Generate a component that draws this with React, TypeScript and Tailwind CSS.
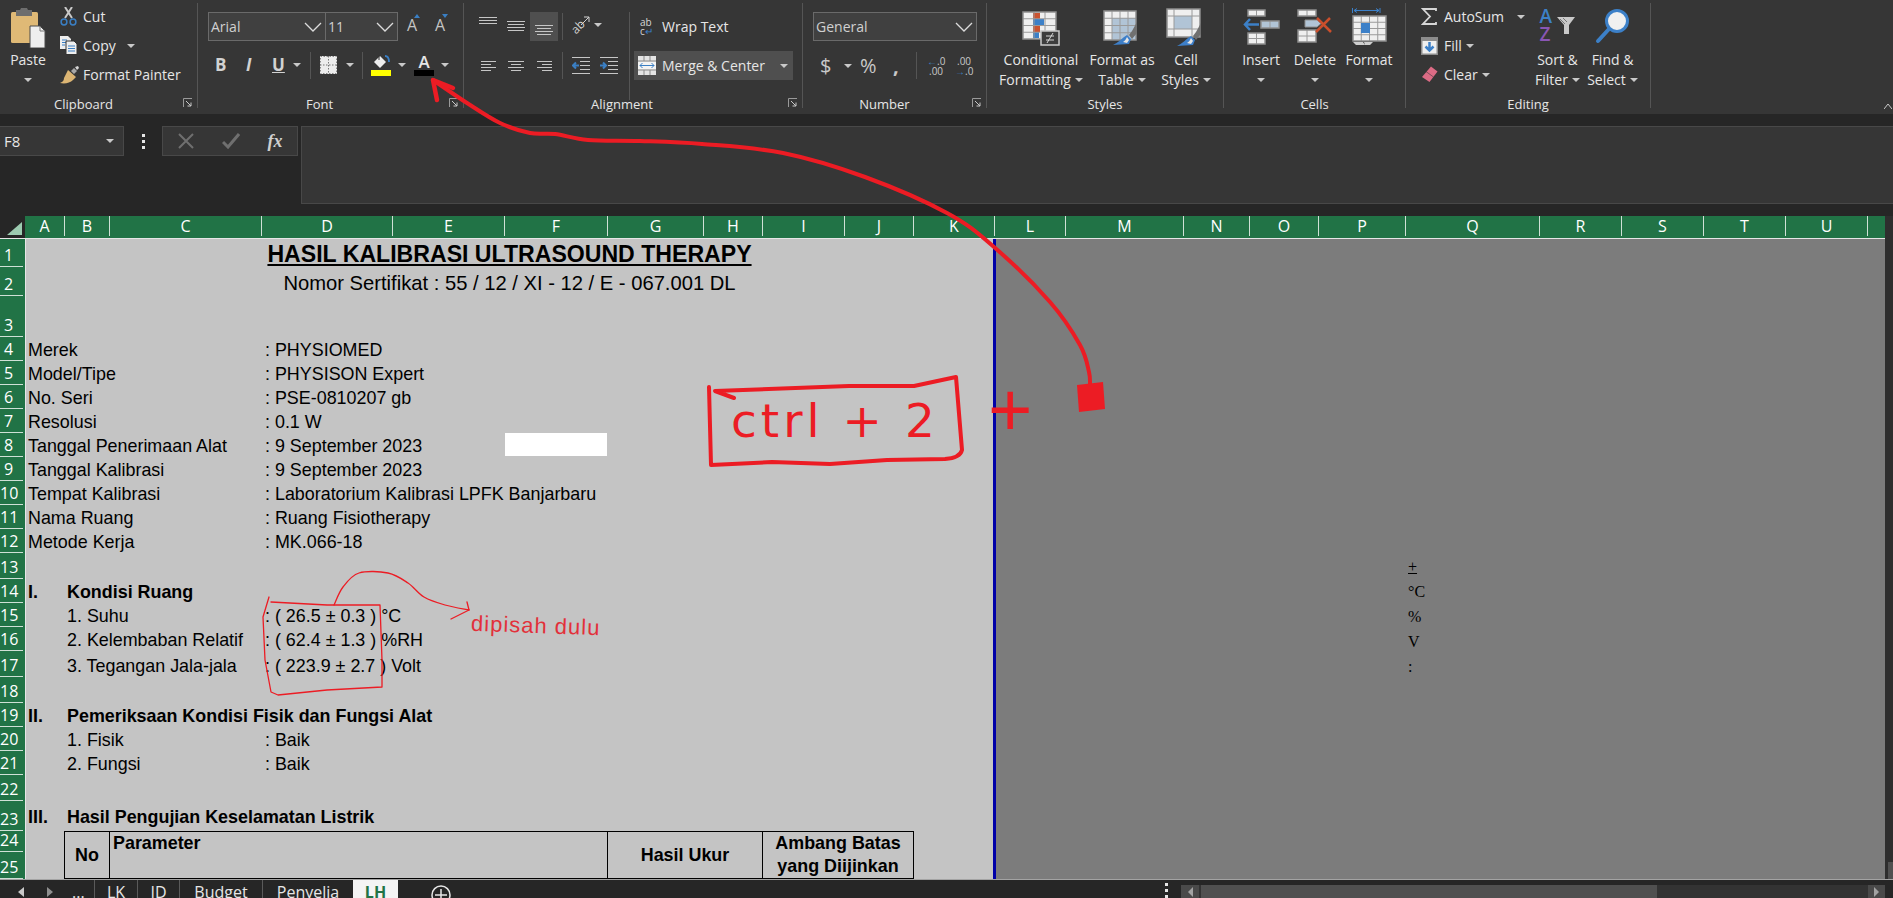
import React from "react";

const Caret = ({ className = "" }: { className?: string }) => (
  <svg width="8" height="4" viewBox="0 0 8 4" className={`shrink-0 ${className}`}>
    <path d="M0 0h8L4 4z" fill="#c9c9c9" />
  </svg>
);

const Chevron = () => (
  <svg width="18" height="10" viewBox="0 0 18 10" className="shrink-0">
    <path d="M1 1l8 8 8-8" fill="none" stroke="#dcdcdc" strokeWidth="1.3" />
  </svg>
);

const Launcher = () => (
  <svg width="10" height="10" viewBox="0 0 10 10">
    <path d="M.5 9V.5H9" fill="none" stroke="#9a9a9a" />
    <path d="M3 3l5 5M8 4.5V8H4.5" fill="none" stroke="#c9c9c9" />
  </svg>
);

const Sep = ({ h = "h-[105px] mt-[3px]" }: { h?: string }) => <div className={`w-px shrink-0 bg-[#555555] ${h}`} />;
const MiniSep = () => <div className="h-[27px] w-px shrink-0 bg-[#555555]" />;

function Group({ className, label, labelClass = "", launcher = false, children }: { className: string; label: string; labelClass?: string; launcher?: boolean; children: React.ReactNode }) {
  return (
    <section className={`relative flex h-[114px] shrink-0 flex-col ${className}`}>
      <div className="h-[94px] shrink-0">{children}</div>
      <div className={`h-[20px] text-center text-[13px] leading-[20px] ${labelClass}`}>{label}</div>
      {launcher && (
        <div className="absolute right-[4px] top-[98px]">
          <Launcher />
        </div>
      )}
    </section>
  );
}

const PasteIcon = () => (
  <svg width="36" height="40" viewBox="0 0 36 40">
    <rect x="1" y="4" width="27" height="31" rx="1.5" fill="#dfb976" />
    <path d="M6 8V2h4l1-2h6l1 2h4v6z" fill="#6e6e6e" />
    <path d="M20 18h10l5 5v17H20z" fill="#eeeeee" stroke="#4a4a4a" />
    <path d="M30 18v5h5" fill="none" stroke="#777777" />
  </svg>
);
const CutIcon = () => (
  <svg width="17" height="19" viewBox="0 0 17 19">
    <path d="M5 11L12 0M12 11L5 0" stroke="#c9c9c9" strokeWidth="2" />
    <circle cx="4" cy="15" r="2.9" fill="none" stroke="#3a7fc4" strokeWidth="1.5" />
    <circle cx="13" cy="15" r="2.9" fill="none" stroke="#3a7fc4" strokeWidth="1.5" />
  </svg>
);
const CopyIcon = () => (
  <svg width="18" height="19" viewBox="0 0 18 19">
    <path d="M0 0h8l3 3v10H0z" fill="#eeeeee" />
    <path d="M2 4h5M2 6.5h5M2 9h3" stroke="#3a7fc4" />
    <path d="M6 5h8l3 3v10.500H6z" fill="#eeeeee" stroke="#333333" />
    <path d="M8 10h7M8 12.500h7M8 15h7" stroke="#3a7fc4" />
  </svg>
);
const PainterIcon = () => (
  <svg width="19" height="18" viewBox="0 0 19 18">
    <path d="M11 5l3-3 3 3-3 3z" fill="#a8a8a8" />
    <path d="M15 1l3-1 1 2-2 2z" fill="#d8d8d8" />
    <path d="M8 3l8 7-3 3c-3 3-8 4-13 3 3-1 4-3 4-5z" transform="translate(0 1)" fill="#dcb573" />
  </svg>
);

const SmallBtn = ({ icon, label, caret, caretClass = "ml-[4px]" }: { icon: React.ReactNode; label: string; caret?: boolean; caretClass?: string }) => (
  <div className="flex h-[29px] items-center">
    <div className="flex w-[23px] shrink-0 items-center">{icon}</div>
    <span className="whitespace-nowrap">{label}</span>
    {caret && <Caret className={caretClass} />}
  </div>
);

const Combo = ({ className, text }: { className: string; text: string }) => (
  <div className={`flex h-[29px] items-center justify-between border border-[#6a6a6a] bg-[#404040] pl-[2px] pr-[3px] text-[#d0d0d0] ${className}`}>
    <span>{text}</span>
    <Chevron />
  </div>
);

const GrowA = ({ up }: { up: boolean }) => (
  <div className="relative flex w-[18px] justify-center text-[16px] leading-[20px] text-[#c4c4c4]">
    <span>A</span>
    <svg width="6" height="4" viewBox="0 0 6 4" className="absolute right-[1px] top-[-1px]">
      <path d={up ? "M0 4h6L3 0z" : "M0 0h6L3 4z"} fill="#3a7fc4" />
    </svg>
  </div>
);

const BordersIcon = () => (
  <svg width="17" height="18" viewBox="0 0 17 18">
    <rect width="17" height="18" fill="#ededed" />
    <path d="M8.500 0v18M0 9h17" stroke="#777777" strokeDasharray="1.500 1.500" />
    <path d="M.5.5h16v17H.5z" fill="none" stroke="#8a8a8a" strokeDasharray="1.500 1.500" />
  </svg>
);
const BucketIcon = () => (
  <svg width="20" height="14" viewBox="0 0 20 14">
    <path d="M9 1l6 6-6 6-6-6z" fill="#eeeeee" />
    <path d="M8 0v5" stroke="#333333" />
    <path d="M14 1c3 0 4 3 4 6" fill="none" stroke="#3a7fc4" strokeWidth="1.800" />
  </svg>
);

const Lines = ({ w = 18, ys, x = [] as number[], ws = [] as number[] }: { w?: number; ys: number[]; x?: number[]; ws?: number[] }) => (
  <svg width={w} height={Math.max(...ys) + 1} viewBox={`0 0 ${w} ${Math.max(...ys) + 1}`}>
    {ys.map((y, i) => (
      <rect key={i} x={x[i] ?? 0} y={y} width={ws[i] ?? w} height="1" fill="#c6c6c6" />
    ))}
  </svg>
);

const IndentIcon = ({ inc }: { inc?: boolean }) => (
  <svg width="18" height="17" viewBox="0 0 18 17">
    <path d="M0 .5h18M8 4.500h10M8 8.500h10M8 12.500h10M0 16.500h18" stroke="#c6c6c6" />
    <path d={inc ? "M0 8.500h5M3 5.500l3 3-3 3" : "M7 8.500H1M4 5.500l-3 3 3 3"} fill="none" stroke="#3a7fc4" strokeWidth="2" />
  </svg>
);

const MergeIcon = () => (
  <svg width="18" height="19" viewBox="0 0 18 19">
    <rect width="18" height="19" fill="#e4e4e4" />
    <path d="M0 5h18M0 14h18M6 0v5M12 0v5M6 14v5M12 14v5" stroke="#8a8a8a" />
    <rect x="0" y="6" width="18" height="7" fill="#f4f4f4" />
    <path d="M2 9.500h14M4.500 7l-2.500 2.500L4.500 12M13.500 7l2.500 2.500L13.500 12" fill="none" stroke="#3a7fc4" />
  </svg>
);

const Grid = ({ x, y, w, h, cols, rows }: { x: number; y: number; w: number; h: number; cols: number; rows: number }) => (
  <>
    {Array.from({ length: cols - 1 }, (_, i) => (
      <path key={`c${i}`} d={`M${x + ((i + 1) * w) / cols} ${y}v${h}`} stroke="#9a9a9a" />
    ))}
    {Array.from({ length: rows - 1 }, (_, i) => (
      <path key={`r${i}`} d={`M${x} ${y + ((i + 1) * h) / rows}h${w}`} stroke="#9a9a9a" />
    ))}
    <rect x={x} y={y} width={w} height={h} fill="none" stroke="#8f8f8f" strokeWidth="1.500" />
  </>
);

const CondIcon = () => (
  <svg width="38" height="36" viewBox="0 0 38 36">
    <rect x="1" y="1" width="33" height="27" fill="#efefef" />
    <rect x="11" y="2" width="7" height="6" fill="#ca5330" />
    <rect x="11" y="8" width="11" height="6" fill="#3c80c8" />
    <rect x="11" y="15" width="7" height="6" fill="#ca5330" />
    <rect x="11" y="21" width="6" height="6" fill="#3c80c8" />
    <Grid x={1} y={1} w={33} h={27} cols={3} rows={4} />
    <rect x="19" y="20" width="18" height="14" fill="#3d3d3d" stroke="#c9c9c9" strokeWidth="1.500" />
    <path d="M24 25h8M24 29h8M31 22l-6 10" stroke="#d6d6d6" />
  </svg>
);
const Brush = ({ x, y }: { x: number; y: number }) => (
  <g transform={`translate(${x} ${y})`}>
    <path d="M16 13l3-4 5-9v11l-5 6z" fill="#707070" />
    <path d="M14 13l4 4-2 5-16 1c5-2 9-7 14-10z" fill="#3d7fc9" />
    <path d="M10 20c2-1 3-3 4-5l2 3-2 3z" fill="#e6e6e6" />
  </g>
);
const TableIcon = () => (
  <svg width="38" height="36" viewBox="0 0 38 36">
    <rect x="1" y="1" width="32" height="29" fill="#efefef" />
    <rect x="9" y="8" width="24" height="22" fill="#b1c4d6" />
    <Grid x={1} y={1} w={32} h={29} cols={4} rows={4} />
    <Brush x={10} y={12} />
  </svg>
);
const CellIcon = () => (
  <svg width="40" height="39" viewBox="0 0 40 39">
    <rect x="1" y="1" width="33" height="28" fill="#efefef" stroke="#8f8f8f" strokeWidth="1.500" />
    <rect x="8" y="8" width="18" height="13" fill="#b1c4d6" />
    <path d="M1 8h33M1 21h33M8 1v28M26 1v28" stroke="#9a9a9a" />
    <Brush x={11} y={15} />
  </svg>
);
const Cells = ({ x, y, w, h, c, r, fill = "#efefef" }: { x: number; y: number; w: number; h: number; c: number; r: number; fill?: string }) => (
  <>
    <rect x={x} y={y} width={w} height={h} fill={fill} />
    <Grid x={x} y={y} w={w} h={h} cols={c} rows={r} />
  </>
);
const InsertIcon = () => (
  <svg width="37" height="36" viewBox="0 0 37 36">
    <Cells x={5} y={1} w={17} h={6} c={2} r={1} />
    <Cells x={18} y={12} w={18} h={7} c={2} r={1} fill="#b1c4d6" />
    <Cells x={5} y={24} w={17} h={11} c={2} r={2} />
    <path d="M16 15.500H2M7 10l-5 5.500L7 21" fill="none" stroke="#3c80c8" strokeWidth="2.500" />
  </svg>
);
const DeleteIcon = () => (
  <svg width="36" height="35" viewBox="0 0 36 35">
    <Cells x={1} y={1} w={18} h={6} c={2} r={1} />
    <path d="M8 11h12l4 3.500-4 3.500H8z" fill="#b1c4d6" stroke="#8f8f8f" />
    <Cells x={1} y={21} w={18} h={12} c={2} r={2} />
    <path d="M19 23L33 9M20 9l14 14" stroke="#cb4f2c" strokeWidth="2.500" />
  </svg>
);
const FormatIcon = () => (
  <svg width="35" height="37" viewBox="0 0 35 37">
    <path d="M.5 0v5M28 0v5M2 2.500h25M5 .5l-3 2 3 2M24 .5l3 2-3 2" fill="none" stroke="#3c80c8" />
    <Cells x={1} y={8} w={33} h={25} c={4} r={4} />
    <rect x={9} y={15} width={9} height={10} fill="#3c80c8" />
    <path d="M1 34h10l2 3H4zM12 34h9l-3 3h-5z" fill="#cfcfcf" />
  </svg>
);
const SigmaIcon = () => (
  <svg width="16" height="17" viewBox="0 0 16 17">
    <path d="M15 3V1H2l7 7.500L2 16h13v-2" fill="none" stroke="#d6d6d6" strokeWidth="1.800" />
  </svg>
);
const FillIcon = () => (
  <svg width="17" height="18" viewBox="0 0 17 18">
    <rect width="17" height="18" fill="#8c8c8c" />
    <rect x="1.500" y="4" width="14" height="12.500" fill="#efefef" />
    <path d="M8.500 5v8M4.500 9.500l4 4 4-4" fill="none" stroke="#3c80c8" strokeWidth="2.500" />
  </svg>
);
const EraserIcon = () => (
  <svg width="17" height="17" viewBox="0 0 17 17">
    <path d="M10 .5l6.500 5-8 10.500L1 11z" fill="#dc6b85" />
    <path d="M5 5.500l7.500 5.500" stroke="#3a3a3a" strokeWidth=".6" />
  </svg>
);
const SortIcon = () => (
  <div className="relative h-[36px] w-[36px]">
    <span className="absolute left-0 top-[-3px] text-[19px] font-semibold leading-[20px] text-[#3c80c8]">A</span>
    <span className="absolute left-0 top-[15px] text-[19px] font-semibold leading-[20px] text-[#8a56b4]">Z</span>
    <svg width="18" height="17" viewBox="0 0 18 17" className="absolute left-[17px] top-[8px]">
      <path d="M0 0h18l-6 8v9H7V8z" fill="#c9c9c9" />
      <path d="M3 2l5 5M6 1l4 4" stroke="#777777" />
    </svg>
  </div>
);
const FindIcon = () => (
  <svg width="36" height="36" viewBox="0 0 36 36">
    <path d="M14 21L3 33" stroke="#3c80c8" strokeWidth="4" strokeLinecap="round" />
    <circle cx="22" cy="13" r="10.500" fill="#f0f0f0" stroke="#3c80c8" strokeWidth="3" />
  </svg>
);

const Big = ({ className, icon, iconClass = "items-end", lines, oneLine }: { className: string; icon: React.ReactNode; iconClass?: string; lines: [string, string?]; oneLine?: boolean }) => (
  <div className={`flex shrink-0 flex-col items-center ${className}`}>
    <div className={`flex h-[50px] w-full justify-center ${iconClass}`}>{icon}</div>
    <div className="whitespace-nowrap text-center leading-[20px]">{lines[0]}</div>
    {oneLine ? (
      <div className="flex h-[20px] items-center"><Caret /></div>
    ) : (
      <div className="flex h-[20px] items-center whitespace-nowrap leading-[20px]">
        {lines[1]}
        <Caret className="ml-[4px]" />
      </div>
    )}
  </div>
);

function Ribbon() {
  return (
    <div className="flex h-[114px] bg-[#363636] text-[14px] text-[#e6e6e6]">
      <Group className="w-[197px]" label="Clipboard" labelClass="pr-[30px]" launcher>
        <div className="flex">
          <div className="flex w-[60px] shrink-0 flex-col items-center pr-[4px]">
            <div className="flex h-[50px] items-end pb-[2px]"><PasteIcon /></div>
            <div className="leading-[20px]">Paste</div>
            <div className="flex h-[20px] items-center"><Caret /></div>
          </div>
          <div className="flex flex-col pt-[2px]">
            <SmallBtn icon={<CutIcon />} label="Cut" />
            <SmallBtn icon={<CopyIcon />} label="Copy" caret caretClass="ml-[11px]" />
            <SmallBtn icon={<PainterIcon />} label="Format Painter" />
          </div>
        </div>
      </Group>
      <Sep />
      <Group className="w-[265px]" label="Font" labelClass="pr-[22px]" launcher>
        <div className="flex h-[41px] items-end pl-[10px]">
          <Combo className="w-[118px] font-normal" text="Arial" />
          <Combo className="w-[72px] border-l-0" text="11" />
          <div className="ml-[5px] mb-[6px] flex gap-[10px]"><GrowA up /><GrowA up={false} /></div>
        </div>
        <div className="mt-[10px] flex h-[28px] items-center pl-[17px] text-[17px] font-bold text-[#d2d2d2]">
          <span className="w-[31px]">B</span>
          <span className="w-[26px] italic">I</span>
          <span className="w-[18px] underline">U</span>
          <Caret className="ml-[3px]" />
          <div className="ml-[9px]"><MiniSep /></div>
          <div className="ml-[9px]"><BordersIcon /></div>
          <Caret className="ml-[9px]" />
          <div className="ml-[8px]"><MiniSep /></div>
          <div className="ml-[8px] flex w-[20px] flex-col">
            <BucketIcon />
            <div className="mt-[1px] h-[6px] bg-[#ffff00]" />
          </div>
          <Caret className="ml-[7px]" />
          <div className="ml-[8px] flex w-[20px] flex-col items-center">
            <span className="text-[17px] font-semibold leading-[15px] text-[#e6e6e6]">A</span>
            <div className="mt-[1px] h-[6px] w-full bg-black" />
          </div>
          <Caret className="ml-[7px]" />
        </div>
      </Group>
      <Sep />
      <Group className="w-[338px]" label="Alignment" labelClass="pr-[22px]" launcher>
        <div className="flex h-[94px]">
          <div className="w-[165px] shrink-0 pl-[10px]">
            <div className="flex h-[41px] items-end">
              <div className="flex h-[29px] w-[28px] justify-center pt-[5px]"><Lines ys={[0, 3, 6]} /></div>
              <div className="flex h-[29px] w-[28px] justify-center pt-[9px]"><Lines ys={[0, 3, 6, 9]} x={[0, 1, 0, 1]} ws={[18, 16, 18, 16]} /></div>
              <div className="flex h-[29px] w-[28px] justify-center bg-[#4f4f4f] pt-[13px]"><Lines ys={[0, 3, 6, 9]} x={[0, 2, 0, 2]} ws={[18, 14, 18, 14]} /></div>
              <div className="ml-[4px] mb-[1px]"><MiniSep /></div>
              <div className="relative ml-[5px] flex h-[29px] w-[20px] items-center justify-center">
                <span className="-rotate-45 text-[12px] leading-none text-[#d2d2d2]">ab</span>
                <svg width="10" height="10" viewBox="0 0 10 10" className="absolute right-[-2px] top-[4px]">
                  <path d="M1 9l8-8M4 1h5v5" fill="none" stroke="#d2d2d2" />
                </svg>
              </div>
              <Caret className="mb-[14px] ml-[6px]" />
            </div>
            <div className="mt-[10px] flex h-[29px] items-center">
              <div className="flex w-[28px] justify-center"><Lines w={15} ys={[0, 3, 6, 9]} ws={[15, 10, 15, 10]} /></div>
              <div className="flex w-[28px] justify-center"><Lines w={16} ys={[0, 3, 6, 9]} x={[0, 3, 0, 3]} ws={[16, 10, 16, 10]} /></div>
              <div className="flex w-[28px] justify-center"><Lines w={15} ys={[0, 3, 6, 9]} x={[0, 5, 0, 5]} ws={[15, 10, 15, 10]} /></div>
              <div className="ml-[4px]"><MiniSep /></div>
              <div className="ml-[9px]"><IndentIcon /></div>
              <div className="ml-[10px]"><IndentIcon inc /></div>
            </div>
          </div>
          <Sep h="h-[88px] mt-[12px]" />
          <div className="flex-1 pl-[4px]">
            <div className="flex h-[41px] items-end">
              <div className="flex h-[29px] items-center pl-[6px]">
                <div className="flex w-[22px] flex-col text-[10px] leading-[9px] text-[#d6d6d6]">
                  <span>ab</span>
                  <span>c<span className="text-[#3c80c8]">↵</span></span>
                </div>
                <span className="text-[14px]">Wrap Text</span>
              </div>
            </div>
            <div className="mt-[10px] flex h-[29px] w-[159px] items-center bg-[#4f4f4f] pl-[4px]">
              <div className="w-[24px]"><MergeIcon /></div>
              <span className="whitespace-nowrap">Merge &amp; Center</span>
              <Caret className="ml-auto mr-[5px]" />
            </div>
          </div>
        </div>
      </Group>
      <Sep />
      <Group className="w-[183px]" label="Number" labelClass="pr-[20px]" launcher>
        <div className="flex h-[41px] items-end pl-[10px]">
          <Combo className="w-[164px]" text="General" />
        </div>
        <div className="mt-[10px] flex h-[29px] items-center pl-[17px] text-[#c9c9c9]">
          <span className="w-[24px] text-[20px]">$</span>
          <Caret />
          <span className="ml-[8px] w-[30px] text-[20px]">%</span>
          <span className="w-[26px] pl-[3px] text-[20px] font-bold leading-[12px]">,</span>
          <MiniSep />
          <div className="ml-[10px] flex w-[28px] flex-col text-[10px] leading-[10px]">
            <span><span className="text-[#3c80c8]">←</span>.0</span>
            <span className="pl-[2px]">.00</span>
          </div>
          <div className="flex w-[20px] flex-col text-[10px] leading-[10px]">
            <span className="pl-[2px]">.00</span>
            <span><span className="text-[#3c80c8]">→</span>.0</span>
          </div>
        </div>
      </Group>
      <Sep />
      <Group className="w-[236px]" label="Styles">
        <div className="flex pl-[13px]">
          <Big className="w-[82px]" icon={<CondIcon />} iconClass="items-start pt-[11px]" lines={["Conditional", "Formatting"]} />
          <Big className="w-[80px]" icon={<TableIcon />} iconClass="items-start pt-[10px]" lines={["Format as", "Table"]} />
          <Big className="w-[48px]" icon={<CellIcon />} iconClass="items-start pt-[8px]" lines={["Cell", "Styles"]} />
        </div>
      </Group>
      <Sep />
      <Group className="w-[181px]" label="Cells">
        <div className="flex pl-[10px]">
          <Big className="w-[54px]" icon={<InsertIcon />} iconClass="items-start pt-[9px]" lines={["Insert"]} oneLine />
          <Big className="w-[54px]" icon={<DeleteIcon />} iconClass="items-start pt-[9px]" lines={["Delete"]} oneLine />
          <Big className="w-[54px]" icon={<FormatIcon />} iconClass="items-start pt-[8px]" lines={["Format"]} oneLine />
        </div>
      </Group>
      <Sep />
      <Group className="w-[244px]" label="Editing">
        <div className="flex">
          <div className="flex w-[124px] shrink-0 flex-col pl-[15px] pt-[2px]">
            <SmallBtn icon={<SigmaIcon />} label="AutoSum" caret caretClass="ml-[13px]" />
            <SmallBtn icon={<FillIcon />} label="Fill" caret />
            <SmallBtn icon={<EraserIcon />} label="Clear" caret />
          </div>
          <Big className="w-[55px]" icon={<SortIcon />} iconClass="items-start pt-[9px]" lines={["Sort &", "Filter"]} />
          <Big className="w-[55px]" icon={<FindIcon />} iconClass="items-start pt-[8px]" lines={["Find &", "Select"]} />
        </div>
      </Group>
      <Sep />
      <div className="flex flex-1 items-end justify-end pb-[5px] pr-[1px]">
        <svg width="8" height="6" viewBox="0 0 8 6"><path d="M0 6l4-5 4 5" fill="none" stroke="#c9c9c9" /></svg>
      </div>
    </div>
  );
}

function FormulaBar() {
  return (
    <div className="flex h-[102px] bg-[#262626] pt-[12px]">
      <div className="flex h-[30px] w-[124px] shrink-0 items-center justify-between border border-l-0 border-[#484848] bg-[#363636] pl-[4px] pr-[9px] text-[15px] text-[#e6e6e6]">
        <span>F8</span>
        <Caret />
      </div>
      <div className="flex h-[30px] w-[38px] shrink-0 flex-col items-center justify-center gap-[3px]">
        <i className="h-[3px] w-[3px] bg-[#e6e6e6]" />
        <i className="h-[3px] w-[3px] bg-[#e6e6e6]" />
        <i className="h-[3px] w-[3px] bg-[#e6e6e6]" />
      </div>
      <div className="flex h-[30px] w-[136px] shrink-0 items-center border border-[#484848] bg-[#363636]">
        <div className="flex w-[45px] justify-center">
          <svg width="16" height="16" viewBox="0 0 16 16"><path d="M1 1l14 14M15 1L1 15" stroke="#6f6f6f" strokeWidth="2" /></svg>
        </div>
        <div className="flex w-[46px] justify-center">
          <svg width="18" height="16" viewBox="0 0 18 16"><path d="M1 9l5 5L17 1" fill="none" stroke="#6f6f6f" strokeWidth="3" /></svg>
        </div>
        <span className="flex w-[42px] justify-center text-[18px] font-bold italic text-[#cfcfcf] [font-family:'Liberation_Serif',serif]">fx</span>
      </div>
      <div className="ml-[3px] h-[78px] flex-1 border-y border-l border-[#484848] bg-[#363636]" />
    </div>
  );
}

const cols: [string, string][] = [
  ["A", "w-[40px]"], ["B", "w-[45px]"], ["C", "w-[152px]"], ["D", "w-[131px]"], ["E", "w-[112px]"], ["F", "w-[103px]"], ["G", "w-[96px]"], ["H", "w-[59px]"], ["I", "w-[82px]"], ["J", "w-[69px]"], ["K", "w-[81px]"], ["L", "w-[71px]"], ["M", "w-[118px]"], ["N", "w-[66px]"], ["O", "w-[69px]"], ["P", "w-[87px]"], ["Q", "w-[134px]"], ["R", "w-[82px]"], ["S", "w-[82px]"], ["T", "w-[82px]"], ["U", "w-[82px]"],
];

const rowHeads: [string, string][] = [
  ["1", "h-[28px]"], ["2", "h-[29px]"], ["3", "h-[41px]"], ["4", "h-[24px]"], ["5", "h-[24px]"], ["6", "h-[24px]"], ["7", "h-[24px]"], ["8", "h-[24px]"], ["9", "h-[24px]"], ["10", "h-[24px]"], ["11", "h-[24px]"], ["12", "h-[24px]"], ["13", "h-[26px]"], ["14", "h-[24px]"], ["15", "h-[24px]"], ["16", "h-[24px]"], ["17", "h-[26px]"], ["18", "h-[26px]"], ["19", "h-[24px]"], ["20", "h-[24px]"], ["21", "h-[24px]"], ["22", "h-[26px]"], ["23", "h-[30px]"], ["24", "h-[21px]"], ["25", "h-[27px]"],
];

function ColHeaders() {
  return (
    <div className="flex h-[22px] bg-[#217346] text-[16px] text-white">
      <div className="flex h-[22px] w-[25px] shrink-0 items-end bg-[#262626] pb-[3px] pl-[7px]">
        <svg width="15" height="13" viewBox="0 0 15 13"><path d="M15 0v13H0z" fill="#9ccbb0" /></svg>
      </div>
      {cols.map(([c, w]) => (
        <div key={c} className={`flex h-[20px] shrink-0 items-center justify-center border-r border-[#cfe0d6] leading-[20px] ${w}`}>{c}</div>
      ))}
    </div>
  );
}

function RowHeaders() {
  return (
    <div className="w-[25px] shrink-0 bg-[#217346] text-[16px] text-white">
      {rowHeads.map(([n, h]) => (
        <div key={n} className={`flex w-[23px] items-end border-b border-[#cfe0d6] ${h}`}>
          <span className="w-[17px] text-center leading-[22px]">{n}</span>
        </div>
      ))}
    </div>
  );
}

const rowGrid = "grid grid-cols-[38px_45px_152px_131px_1fr] items-end whitespace-nowrap pl-0 leading-[22px]";

const InfoRow = ({ label, value }: { label: string; value: string }) => (
  <div className={`h-[24px] ${rowGrid}`}>
    <span className="col-start-1 pl-[2px]">{label}</span>
    <span className="col-start-4 pl-[4px]">{value}</span>
  </div>
);
const SecHead = ({ num, text, h = "h-[24px]", extra = "" }: { num: string; text: string; h?: string; extra?: string }) => (
  <div className={`${h} ${rowGrid} ${extra} font-bold`}>
    <span className="col-start-1 pl-[2px]">{num}</span>
    <span className="col-start-2 pl-[3px]">{text}</span>
  </div>
);
const SubRow = ({ label, value, h = "h-[24px]" }: { label: string; value: string; h?: string }) => (
  <div className={`${h} ${rowGrid}`}>
    <span className="col-start-2 pl-[3px]">{label}</span>
    <span className="col-start-4 pl-[4px]">{value}</span>
  </div>
);

function Page() {
  const infos: [string, string][] = [
    ["Merek", ": PHYSIOMED"],
    ["Model/Tipe", ": PHYSISON Expert"],
    ["No. Seri", ": PSE-0810207 gb"],
    ["Resolusi", ": 0.1 W"],
  ];
  const infos2: [string, string][] = [
    ["Tanggal Kalibrasi", ": 9 September 2023"],
    ["Tempat Kalibrasi", ": Laboratorium Kalibrasi LPFK Banjarbaru"],
    ["Nama Ruang", ": Ruang Fisiotherapy"],
    ["Metode Kerja", ": MK.066-18"],
  ];
  return (
    <div className="w-[967px] shrink-0 bg-[#c4c4c4] text-[17.9px] text-black [font-family:'Liberation_Sans',Arial,sans-serif]">
      <div className="flex h-[28px] items-end justify-center whitespace-nowrap text-[23.100px] font-bold leading-[26px] underline">HASIL KALIBRASI ULTRASOUND THERAPY</div>
      <div className="flex h-[29px] items-end justify-center whitespace-nowrap text-[20.200px] leading-[26px]">Nomor Sertifikat : 55 / 12 / XI - 12 / E - 067.001 DL</div>
      <div className="h-[41px]" />
      {infos.map(([l, v]) => <InfoRow key={l} label={l} value={v} />)}
      <div className="relative">
        <InfoRow label="Tanggal Penerimaan Alat" value=": 9 September 2023" />
        <div className="absolute left-[479px] top-[0px] h-[23px] w-[102px] bg-white" />
      </div>
      {infos2.map(([l, v]) => <InfoRow key={l} label={l} value={v} />)}
      <div className="h-[26px]" />
      <SecHead num="I." text="Kondisi Ruang" />
      <SubRow label="1. Suhu" value=": ( 26.5 ± 0.3 ) °C" />
      <SubRow label="2. Kelembaban Relatif" value=": ( 62.4 ± 1.3 ) %RH" />
      <SubRow label="3. Tegangan Jala-jala" value=": ( 223.9 ± 2.7 ) Volt" h="h-[26px]" />
      <div className="h-[26px]" />
      <SecHead num="II." text="Pemeriksaan Kondisi Fisik dan Fungsi Alat" />
      <SubRow label="1. Fisik" value=": Baik" />
      <SubRow label="2. Fungsi" value=": Baik" />
      <div className="h-[26px]" />
      <SecHead num="III." text="Hasil Pengujian Keselamatan Listrik" h="h-[30px]" extra="pb-[3px]" />
      <div className="grid h-[48px] grid-cols-[38px_45px_498px_155px_152px] font-bold">
        <div />
        <div className="flex items-center justify-center border-y border-l border-black">No</div>
        <div className="border-y border-l border-black pl-[3px] leading-[22px]">Parameter</div>
        <div className="flex items-center justify-center border-y border-l border-black">Hasil Ukur</div>
        <div className="flex flex-col items-center justify-center whitespace-nowrap border border-black leading-[23px]">
          <span>Ambang Batas</span>
          <span>yang Diijinkan</span>
        </div>
      </div>
    </div>
  );
}

function Outside() {
  const items = ["±", "°C", "%", "V", ":"];
  return (
    <div className="flex-1 bg-[#7c7c7c] pl-[412px] pt-[316px] text-[16px] text-black [font-family:'Liberation_Serif',serif]">
      {items.map((t, i) => (
        <div key={i} className="h-[25px] leading-[24px]">{t === "±" ? <span className="underline">+</span> : t}</div>
      ))}
    </div>
  );
}

function TabsBar() {
  return (
    <div className="flex h-[19px] overflow-hidden border-t border-[#a3a3a3] bg-[#262626] text-[16px] text-[#e6e6e6]">
      <div className="flex w-[94px] shrink-0 items-center pt-[6px]">
        <svg width="6" height="10" viewBox="0 0 6 10" className="ml-[18px]"><path d="M6 0v10L0 5z" fill="#c9c9c9" /></svg>
        <svg width="6" height="10" viewBox="0 0 6 10" className="ml-[23px]"><path d="M0 0v10l6-5z" fill="#8f8f8f" /></svg>
        <span className="ml-[19px] leading-[10px]">...</span>
      </div>
      <div className="flex w-[44px] shrink-0 justify-center border-x border-[#5a5a5a] leading-[24px]">LK</div>
      <div className="flex w-[42px] shrink-0 justify-center border-r border-[#5a5a5a] leading-[24px]">ID</div>
      <div className="flex w-[83px] shrink-0 justify-center border-r border-[#5a5a5a] leading-[24px]">Budget</div>
      <div className="flex w-[90px] shrink-0 justify-center leading-[24px]">Penyelia</div>
      <div className="flex w-[45px] shrink-0 justify-center bg-[#f4f4f4] font-bold leading-[24px] text-[#217346]">LH</div>
      <svg width="20" height="20" viewBox="0 0 20 20" className="ml-[33px] mt-[5px] shrink-0">
        <circle cx="10" cy="10" r="9" fill="none" stroke="#e6e6e6" strokeWidth="1.500" />
        <path d="M10 4v12M4 10h12" stroke="#e6e6e6" strokeWidth="1.500" />
      </svg>
      <div className="flex-1" />
      <div className="mr-[13px] flex w-[3px] flex-col gap-[3px] pt-[3px]">
        <i className="h-[3px] w-[3px] bg-[#e6e6e6]" />
        <i className="h-[3px] w-[3px] bg-[#e6e6e6]" />
        <i className="h-[3px] w-[3px] bg-[#e6e6e6]" />
      </div>
      <div className="mt-[5px] flex h-[13px] w-[704px] shrink-0 bg-[#333333]">
        <div className="flex h-full w-[18px] items-center justify-center bg-[#4a4a4a]">
          <svg width="5" height="10" viewBox="0 0 5 10"><path d="M5 0v10L0 5z" fill="#a3a3a3" /></svg>
        </div>
        <div className="ml-[2px] h-full w-[456px] bg-[#505050]" />
        <div className="ml-auto flex h-full w-[17px] items-center justify-center bg-[#4a4a4a]">
          <svg width="5" height="10" viewBox="0 0 5 10"><path d="M0 0v10l5-5z" fill="#a3a3a3" /></svg>
        </div>
      </div>
      <div className="w-[8px] shrink-0" />
    </div>
  );
}

function smooth(p: number[][]) {
  let d = `M${p[0][0]} ${p[0][1]}`;
  for (let i = 0; i < p.length - 1; i++) {
    const a = p[Math.max(i - 1, 0)], b = p[i], c = p[i + 1], e = p[Math.min(i + 2, p.length - 1)];
    d += ` C${b[0] + (c[0] - a[0]) / 6} ${b[1] + (c[1] - a[1]) / 6} ${c[0] - (e[0] - b[0]) / 6} ${c[1] - (e[1] - b[1]) / 6} ${c[0]} ${c[1]}`;
  }
  return d;
}

function Annotations() {
  const arrow = [[433, 80], [467, 103], [500, 123], [530, 133], [555, 134], [588, 140], [640, 141], [702, 144], [783, 153], [865, 177], [947, 213], [994, 247], [1050, 302], [1080, 345], [1089, 372], [1090, 386]];
  const curl = [[334, 605], [343, 587], [359, 573], [388, 573], [408, 583], [424, 597], [445, 605], [469, 610]];
  return (
    <>
      <svg width="1893" height="898" viewBox="0 0 1893 898" className="pointer-events-none absolute left-0 top-0">
        <g fill="none" stroke="#ec1c24" strokeLinecap="round" strokeLinejoin="round">
          <path d={smooth(arrow)} strokeWidth="4" />
          <path d="M453 88L433 80L437 100" strokeWidth="4.500" />
          <path d="M709 387L711 465L772 462L830 464L887 460L945 459Q960 458 962 450L956 377L914 386L849 386L715 391L734 398" strokeWidth="4" />
          <path d="M269 597L263 617L265 660L271 692L278 695L327 690L382 687L382 660L380 605L327 605L271 602" strokeWidth="1.300" />
          <path d={smooth(curl)} strokeWidth="1.300" />
          <path d="M467 602L469 610L451 619" strokeWidth="1.300" />
        </g>
        <path d="M1077 385l26-3 2 27-26 3z" fill="#ec1c24" />
      </svg>
      <span className="pointer-events-none absolute left-[731px] top-[391px] whitespace-nowrap text-[47px] leading-[60px] tracking-[4px] text-[#ec1c24] [font-family:'DejaVu_Sans',sans-serif]">ctrl + 2</span>
      <span className="pointer-events-none absolute left-[988px] top-[374px] text-[76px] leading-[72px] text-[#ec1c24] [font-family:'Liberation_Sans',sans-serif]">+</span>
      <span className="pointer-events-none absolute left-[471px] top-[611px] rotate-[2deg] whitespace-nowrap text-[22px] leading-[30px] tracking-[1px] text-[#e2303a] [font-family:'Liberation_Sans',sans-serif]">dipisah dulu</span>
    </>
  );
}

export default function App() {
  return (
    <div className="relative h-[898px] w-[1893px] overflow-hidden bg-[#262626] [font-family:'Open_Sans','Noto_Sans',sans-serif]">
      <Ribbon />
      <FormulaBar />
      <div className="flex h-[663px]">
        <div className="w-[1885px] shrink-0">
          <ColHeaders />
          <div className="h-px bg-[#e6e6e6]" />
          <div className="flex h-[640px]">
            <RowHeaders />
            <div className="w-px shrink-0 bg-[#e6e6e6]" />
            <Page />
            <div className="w-[3px] shrink-0 bg-[#0000a8]" />
            <Outside />
          </div>
        </div>
        <div className="flex flex-1 flex-col justify-end bg-[#2e2e2e] pl-[3px]">
          <div className="h-[17px] bg-[#505050]" />
        </div>
      </div>
      <TabsBar />
      <Annotations />
    </div>
  );
}
